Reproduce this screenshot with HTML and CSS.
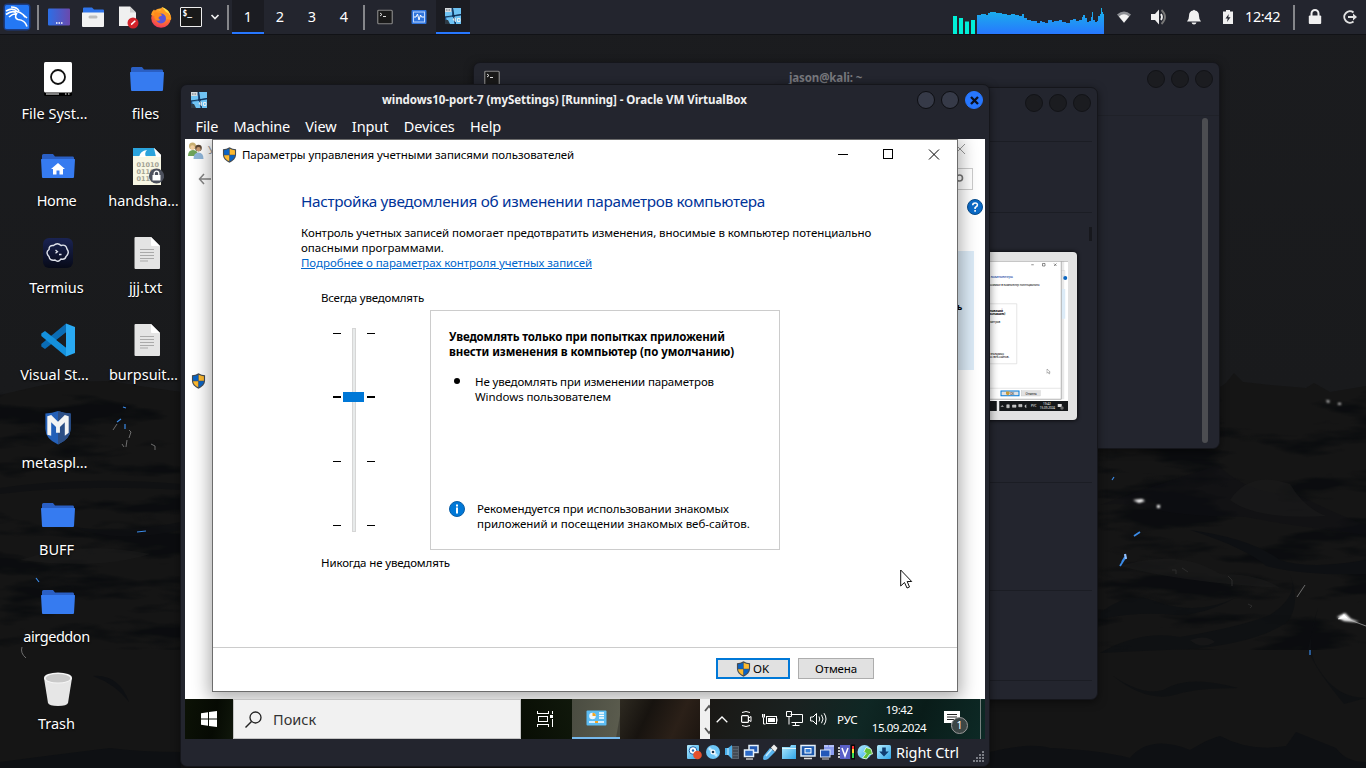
FILE: index.html
```html
<!DOCTYPE html>
<html lang="ru">
<head>
<meta charset="utf-8">
<title>Desktop</title>
<link rel="stylesheet" href="styles.css">
</head>
<body>
<svg class="defs" width="0" height="0" aria-hidden="true">
  <defs>
    <linearGradient id="gGraph" x1="0" y1="0" x2="0" y2="1"><stop offset="0" stop-color="#18b6e8"/><stop offset="1" stop-color="#2777ff"/></linearGradient>
    <linearGradient id="gCy" x1="0" y1="0" x2="1" y2="1"><stop offset="0" stop-color="#b4ecff"/><stop offset="1" stop-color="#2fa4e8"/></linearGradient>
    <linearGradient id="gDesk" x1="0" y1="0" x2="1" y2="0"><stop offset="0" stop-color="#2c6fe6"/><stop offset="1" stop-color="#6b49ad"/></linearGradient>
    <linearGradient id="gSky" x1="0" y1="0" x2="0" y2="1"><stop offset="0" stop-color="#1b1c1f"/><stop offset=".5" stop-color="#191a1c"/><stop offset="1" stop-color="#151618"/></linearGradient>
    <radialGradient id="gFox" cx=".6" cy=".2" r=".9"><stop offset="0" stop-color="#ffe14a"/><stop offset=".45" stop-color="#ff8a1e"/><stop offset="1" stop-color="#f0256a"/></radialGradient>
    <linearGradient id="gTermius" x1="0" y1="0" x2="0" y2="1"><stop offset="0" stop-color="#1a2352"/><stop offset="1" stop-color="#070a18"/></linearGradient>
    <filter id="soft" x="-60%" y="-60%" width="220%" height="220%"><feGaussianBlur stdDeviation=".8"/></filter>
    <filter id="ripple" x="0" y="0" width="100%" height="100%" color-interpolation-filters="sRGB"><feTurbulence type="fractalNoise" baseFrequency=".009 .04" numOctaves="4" seed="8"/><feColorMatrix type="matrix" values="0 0 0 0 .03  0 0 0 0 .04  0 0 0 0 .05  6 0 0 0 -3"/></filter>
  </defs>
  <symbol id="shield" viewBox="0 0 16 17">
    <path d="M8 .3C10 1.7 12.800 2.300 15 2.300V8c0 4-3 7-7 8.700C4 15 1 12 1 8V2.300C3.200 2.300 6 1.700 8 .3z" fill="#444b52"/>
    <path d="M7.800 1.900V8.300H2.200V3.500C4.300 3.400 6.200 2.800 7.800 1.900z" fill="#0a63c4"/><path d="M8.200 1.900C9.800 2.800 11.700 3.400 13.800 3.500V8.300H8.200z" fill="#fdb92e"/>
    <path d="M2.200 8.700H7.800V15.200C4.700 13.700 2.300 11.500 2.200 8.700z" fill="#fdb92e"/><path d="M8.200 8.700h5.600c-.1 2.800-2.500 5-5.600 6.500z" fill="#0a63c4"/>
  </symbol>
  <symbol id="folder" viewBox="0 0 34 34">
    <path d="M1 6.500Q1 5 2.500 5H12l2 2.500H32Q33 7.500 33 9v4H1z" fill="#2a5fc4"/><path d="M0 10.500Q0 10 .6 10H33.400Q34 10 34 10.500L33 28Q33 29 32 29H2Q1 29 1 28z" fill="#367bf0"/>
  </symbol>
  <symbol id="doc" viewBox="0 0 34 34">
    <path d="M5.500 1H21l9 9v22q0 1-1 1H5.500q-1 0-1-1V2q0-1 1-1z" fill="#e4e4e4"/><path d="M21 1l9 9h-8q-1 0-1-1z" fill="#fff"/><path d="M10 13.500h14M10 16.500h14M10 19.500h14M10 22.500h14M10 25h8" stroke="#a9a9a9" stroke-width="1"/>
  </symbol>
  <symbol id="vm" viewBox="0 0 16 16">
    <rect width="16" height="16" fill="#1c4f86"/><path d="M0 4L7 3.500V8.500L0 8.500zM8 0L16 0V6L9 7.200zM1 9.500L8 9 9.500 16H3zM9.500 8.500L16 7.500V16H11z" fill="#6fc3f3"/><path d="M7.500 0L10.500 16M0 9L16 6.500" stroke="#0a2848" stroke-width=".8"/><path d="M0 12h3l2 4H0z" fill="#2d3a45"/><path d="M0 0h6.500v4H0z" fill="#d5dadd"/><path d="M1 2h4.500" stroke="#64717a" stroke-dasharray="1 .5"/><path d="M9.500 9.500L8 12h2.500M10.300 10v4M12.500 10.500h2.500v3h-2.500z" stroke="#e8eef2" fill="none"/>
  </symbol>
  <symbol id="term" viewBox="0 0 16 16">
    <rect x=".75" y="1.250" width="14.500" height="13.500" rx="1" fill="#191919" stroke="#858585" stroke-width="1.200"/><path d="M3 4l2 1.500L3 7M6 7.500h3" stroke="#ddd" fill="none"/>
  </symbol>
</svg>

<svg class="wallpaper" viewBox="0 0 1366 768">
  <rect width="1366" height="768" fill="url(#gSky)"/>
  <path d="M0 395L30 388 48 384 60 382 110 381 140 386 181 392 500 396 1097 400 1219 388 1226 383 1234 373 1243 382 1270 385 1306 388 1314 383 1330 392 1366 386V768H0z" fill="#151515"/>
  <g opacity=".75"><rect y="390" width="1366" height="260" filter="url(#ripple)"/></g>
  <g fill="#0e1013">
    <path d="M1100 505q50-18 118-40 30 30 80 30 40 20 68 30v10q-80-10-120-18-70 0-110-12-25-2-36 0z" opacity=".4"/>
    <path d="M1190 530q60 8 90 30 30 10 86 0v14q-60 2-100-8-20-18-76-36z"/>
    <path d="M1100 613q30-25 60-10 40 12 75-5 -30 17-60 17-35-4-75 4zM1100 653q40-23 80-16 60-10 90-22 30-20 20-40 12 30-4 48-30 20-96 26-50 2-90 4zM1113 676q30 20 50 14 25-16 75-2-40 0-60 6-30 10-65-18z" opacity=".8"/>
    <path d="M1318 608q-14 40 0 60 18 30 48 30l-22 6q-30-36-36-55z" opacity=".8"/>
    <path d="M990 752q40-10 60-4 50 2 80 10 20-24 60-8 20-12 30-14 30 16 66 10l10-14 40 16q10 14 30 14v6H990z"/>
    <path d="M0 488q80-12 181-4v6q-100-6-181 4zM60 522q40 16 121 0v8q-70 16-121-8z" opacity=".7"/><path d="M93 676q26-2 36 26-14-18-36-26zM0 762q60-8 110-14 30 4 71 4v16H0z"/>
  </g>
  <g fill="#1b1b1b" opacity=".6"><path d="M1230 500q20-30 60-16 14 24 36 32-70 4-96-16zM1120 566q60-18 100 8 40 0 60 14-100-6-160-22zM20 560q60-20 130-6-50 16-130 6zM1190 640q16-6 25 2-14 8-25-2z"/></g>
  <g filter="url(#soft)" fill="#fff"><path d="M1133 500l9-1 3 2-6 2zM1157 505h3v3h-3zM1337 617l8-4 6 6 8 3-3 0-12-1zM1326 400l4 1-2 2zM1338 403h3v1.500h-3z"/></g>
  <path d="M1338 619l6-5 5 5zM1350 620l16 6" fill="#fff" stroke="#ccc" stroke-width=".6"/>
  <g stroke="#3b8be8" fill="none"><path d="M1120 566l5-8M1122 562l3-5M1134 536l6-4" stroke-width="1.800"/><path d="M1125 554l1 5" stroke="#8fc0ff" stroke-width="2.200"/><path d="M137 532l9-1M117 422l4-3M125 424v5M36 578l3 4M123 407l3 1M1310 650v5M1112 480l2-3" stroke-width="1.200"/></g>
  <path d="M129 430l2 2-2 6M127 440l-1 7M122 444l2 3M151 444l4 2 0 4M113 430l4-6M22 647q-2 6 4 11M1297 597l8-12" stroke="#777" fill="none" stroke-width=".9"/>
  <path d="M1172 570h4v4M1182 568l6 4M1228 576l4 4v6M1248 604l4 2-2 2" stroke="#2c2c2c" fill="none"/>
</svg>

<header class="panel">
  <div class="cell w34"><svg width="34" height="34" viewBox="0 0 34 34"><rect x="3.500" y="3.500" width="27" height="27" rx="4" fill="#1551c8" opacity=".55"/><rect x="5" y="5" width="24" height="24" rx="1.500" fill="#2478f5"/><path d="M6 11Q13 7 17 11.500Q20 12 23 14.500L27 18M6 14.500Q12 10 16 12.500M9 17Q12 14 16.500 13.500Q14 18 18 19.500Q25 20 27 26.500M11 7Q17 7 19 11M23 14.500L25 17" fill="none" stroke="#fff" stroke-width="1.600"/></svg></div>
  <i class="sep"></i>
  <div class="cell w34"><svg width="24" height="24" viewBox="0 0 24 24"><rect x="1" y="3.500" width="22" height="17" rx="1" fill="url(#gDesk)"/><path d="M9 18h1.500M11.500 18H13M14 18h1.500" stroke="#fff" stroke-width="1.500"/></svg></div>
  <div class="cell w34"><svg width="24" height="24" viewBox="0 0 24 24"><path d="M2 3.500q0-1 1-1h8l2 2h9q1 0 1 1V9H2z" fill="#2f74ea"/><path d="M1 7.500h22V21q0 1-1 1H2q-1 0-1-1z" fill="#f2f2f2"/><rect x="7.500" y="10.500" width="9" height="3" rx="1.500" fill="#bdbdbd"/></svg></div>
  <div class="cell w35"><svg width="24" height="24" viewBox="0 0 24 24"><path d="M3 1.500h11l6 6V21H3z" fill="#f0f0f0"/><path d="M14 1.500l6 6h-6z" fill="#cfcfcf"/><circle cx="17" cy="18" r="5.500" fill="#d3222a"/><path d="M14.800 20.200l.4-1.600 3.600-3.400 1 1-3.600 3.600z" fill="#fff"/></svg></div>
  <div class="cell w32"><svg width="24" height="24" viewBox="0 0 24 24"><circle cx="12" cy="13" r="9.800" fill="url(#gFox)"/><path d="M2 10Q3 6 5 4.500l1.500 2Q9 5 11 6L13 2l5 3q5 5 4 10" fill="#ff9a22"/><circle cx="12" cy="13.500" r="5" fill="#5a55d8"/><path d="M5 7.500q4-1 7 1.500l1 1.500-3 1.200q-1.500 2 1.500 3.300Q7 17 5.500 13z" fill="#ff8b1c"/><path d="M13 2q7 2.500 8.500 9-2-3.500-4.500-4Z" fill="#ffe04a"/></svg></div>
  <div class="cell w28"><svg width="22" height="20" viewBox="0 0 22 20"><rect x=".5" y=".5" width="21" height="19" rx=".5" fill="#191919" stroke="#eee"/><text x="2.500" y="8.500" class="prompt">$_</text></svg></div>
  <div class="cell w19"><svg width="10" height="6" viewBox="0 0 10 6"><path d="M1.500 1L5 4.500 8.500 1" fill="none" stroke="#eee" stroke-width="1.700"/></svg></div>
  <i class="sep"></i>
  <div class="ws on">1</div><div class="ws">2</div><div class="ws">3</div><div class="ws">4</div>
  <i class="sep"></i>
  <div class="cell w34"><svg width="16" height="16"><use href="#term"/></svg></div>
  <div class="cell w34"><svg width="16" height="16" viewBox="0 0 16 16"><rect x=".5" y="1" width="15" height="14" rx="1" fill="#2f74dc"/><rect x="2.500" y="3" width="11" height="10" fill="none" stroke="#bcd6ff"/><path d="M3 8h2l1.500-3L8 11l1.500-5 1 2H13" fill="none" stroke="#fff"/></svg></div>
  <div class="cell w34 on"><svg width="16" height="16"><use href="#vm"/></svg></div>
  <div class="tray">
    <svg width="152" height="34" viewBox="0 0 152 34"><path d="M0 16h4v18H0zM6 18h4v16H6zM12 21.500h4V34h-4zM18 20h4v14h-4z" fill="#00f0d8"/><path d="M24 34V15h4v-1h5v1h2v-2h2v-1h6v1h6v1h5v1h4v-1h4v1h4v1h3v-2h2v4h3v2h4v1h6v2h3v-2h2v1h3v1h3v-3h4v2h2v-1h5v-1h3v2h4v1h4v-3h3v-1h3v2h3v-1h3v-3h1v-2h2v3h2v4h2v-1h2v-4h1v-5h1v8h2v2h2v-1h1v-5h2v-2h1v-6h1v4h1v2h1V34z" fill="url(#gGraph)"/></svg>
    <div class="cell w37"><svg width="16" height="16" viewBox="0 0 16 16"><path d="M1 5.500Q8-.5 15 5.500L8 14z" fill="#8d8f94"/><path d="M3 7.500Q8 3 13 7.500L8 13.500z" fill="#f4f4f4"/></svg></div>
    <div class="cell w34"><svg width="18" height="18" viewBox="0 0 18 18"><path d="M1 6h4l4-4.500v15L5 12H1z" fill="#f0f0f0"/><path d="M11 6q2 3 0 6" fill="none" stroke="#f0f0f0" stroke-width="1.800"/><path d="M11.500 2q7 7 0 14" fill="none" stroke="#777" stroke-width="1.800"/></svg></div>
    <div class="cell w35"><svg width="16" height="16" viewBox="0 0 16 16"><path d="M7 1.500Q8 0 9 1.500q4 .5 4 5.500 0 3.500 2 5.500H1q2-2 2-5.500 0-5 4-5.500zM5.500 13.500h5q-.5 2-2.500 2t-2.500-2z" fill="#f0f0f0"/></svg></div>
    <div class="cell w33"><svg width="12" height="16" viewBox="0 0 12 16"><path d="M1 2.500h3V1h4v1.500h3V15H1z" fill="#f0f0f0"/><path d="M6.800 5L3.500 9.500h2.200L5 13l3.500-4.800H6.300z" fill="#23252e"/></svg></div>
    <span class="clock">12:42</span><i class="sep thin"></i>
    <div class="cell w38"><svg width="14" height="16" viewBox="0 0 14 16"><path d="M3.500 7V4.500a3.500 3.500 0 0 1 7 0V7" fill="none" stroke="#f0f0f0" stroke-width="2"/><rect x=".8" y="6.500" width="12.400" height="8.500" rx="1" fill="#f0f0f0"/></svg></div>
    <div class="cell w32"><svg width="16" height="16" viewBox="0 0 16 16"><path d="M11.500 3.500A5.700 5.700 0 1 0 11.500 12.500" fill="none" stroke="#e2e2e2" stroke-width="2"/><path d="M6 7h5V4.500L15 8l-4 3.500V9H6z" fill="#e2e2e2"/></svg></div>
  </div>
</header>

<main class="icons">
  <div class="ico cut"><svg width="34" height="34" viewBox="0 0 34 34"><rect x="3" y="1" width="28" height="33" rx="1.500" fill="#000"/><rect x="3" y="0" width="28" height="30.500" rx="1.500" fill="#fff"/><circle cx="17" cy="15" r="7" fill="none" stroke="#111" stroke-width="1.800"/><path d="M5 32h13M24 32h1.500M27 32h1.500" stroke="#fff"/></svg><span>File Syst…</span></div>
  <div class="ico"><svg width="34" height="34" viewBox="0 0 34 34"><use href="#folder" width="34" height="34"/><path d="M17 14l7 6h-2v5.500h-3.500v-4h-3v4H12V20h-2z" fill="#fff"/></svg><span class="tight">Home</span></div>
  <div class="ico"><svg width="34" height="34" viewBox="0 0 34 34"><rect x="2" y="2" width="30" height="30" rx="6" fill="url(#gTermius)"/><path d="M12.500 9.500q4-3.500 7.500 0 5-1.500 6 3.500 3 4-1 7.500-1 3.500-5 2.500-3 4-6 1-5.500 1-6-3.500-4-4 0-7 0-4.500 4.500-4z" fill="none" stroke="#dfe2ea" stroke-width="1.400"/><path d="M14.500 14l2 1.700-2 1.500M18 18.500h2.500" stroke="#dfe2ea" fill="none" stroke-width="1.300"/></svg><span>Termius</span></div>
  <div class="ico cut"><svg width="34" height="34" viewBox="0 0 34 34"><path d="M25 .5L34 4V30l-9 3.500z" fill="#29a9f2"/><path d="M25 .5V9.500L4 26 .3 23.500V21z" fill="#0b6cb4"/><path d="M25 33.500V24.500L4 8 .3 10.500V13z" fill="#1490dc"/><path d="M25 9.500V24.500L15.500 17z" fill="#1c1d20"/></svg><span>Visual St…</span></div>
  <div class="ico cut"><svg width="34" height="34" viewBox="0 .5 34 35"><path d="M17 .5Q23 3 30 3V19q0 10-13 16Q4 29 4 19V3Q11 3 17 .5z" fill="#2460b8"/><path d="M17 .5Q23 3 30 3V19q0 10-13 16z" fill="#2d4f86"/><path d="M6 25V6l4-1.500 7 7 7-7L28 6v17l-4 3V12l-5 5v6h-4v-6l-5-5v14z" fill="#f4f4f4"/></svg><span>metaspl…</span></div>
  <div class="ico"><svg width="34" height="34"><use href="#folder"/></svg><span>BUFF</span></div>
  <div class="ico"><svg width="34" height="34"><use href="#folder"/></svg><span class="tight">airgeddon</span></div>
  <div class="ico"><svg width="34" height="34" viewBox="0 0 34 34"><path d="M3 6L7 31q1 3 10 3t10-3L31 6z" fill="#e6e6e6"/><ellipse cx="17" cy="6" rx="14" ry="5.500" fill="#f5f5f5"/><ellipse cx="17" cy="6.300" rx="12.300" ry="4.300" fill="#c9c9c9"/></svg><span>Trash</span></div>
  <div class="ico"><svg width="34" height="34"><use href="#folder"/></svg><span>files</span></div>
  <div class="ico cut"><svg class="tall" width="34" height="38" viewBox="0 0 34 38"><path d="M3 0H24l7 7V37H3z" fill="#f8f7e4"/><path d="M3 0H24l5 8H3z" fill="#2aa3dc"/><path d="M9 9Q10 3 17 2q-3 3-1 7z" fill="#fff"/><path d="M24 0l7 7v2h-5z" fill="#fff"/><g class="bits"><text x="6.500" y="19">01010</text><text x="6.500" y="26">01101</text><text x="6.500" y="33">01110</text></g><circle cx="26.500" cy="28" r="7.600" fill="#4c505c"/><path d="M24.200 27v-1.500a2.300 2.300 0 0 1 4.600 0V27" fill="none" stroke="#fff" stroke-width="1.300"/><rect x="22.500" y="27" width="8" height="5.500" fill="#fff"/></svg><span>handsha…</span></div>
  <div class="ico"><svg width="34" height="34"><use href="#doc"/></svg><span>jjj.txt</span></div>
  <div class="ico cut"><svg width="34" height="34"><use href="#doc"/></svg><span>burpsuit…</span></div>
</main>

<section class="win termwin">
  <div class="tbar"><svg width="16" height="16"><use href="#term"/></svg><b>jason@kali: ~</b><div class="dots"><i></i><i></i><i></i></div></div>
  <div class="tbody"><i class="scroll"></i></div>
</section>

<section class="win mgr">
  <div class="mbar"><div class="dots"><i></i><i></i><i></i></div></div>
  <div class="r1"></div><div class="r2"><i></i></div>
  <div class="r3">
    <div class="thumb">
      <svg width="200" height="150" viewBox="0 0 800 600">
        <rect width="800" height="600" fill="#fff"/><path d="M773 0h12v553h-12z" fill="#e9e9e9"/><path d="M773 112h16v119h-16z" fill="#dcebf7"/><path d="M765 38h22v22h-22" fill="none" stroke="#ccc" stroke-width="2"/><circle cx="789" cy="68" r="8" fill="#0b66c0"/>
        <rect x="27" width="746" height="553" fill="#fff"/><path d="M27 1H773V553H27M773 1h27" fill="none" stroke="#999" stroke-width="3"/><path d="M27 509H773M245 171H595V411H245" fill="none" stroke="#ccc" stroke-width="2"/>
        <path d="M653 15h10M698 10h10v10h-10zM744 10l10 10M754 10l-10 10" fill="none" stroke="#222" stroke-width="2"/>
        <text x="116" y="68" class="th" textLength="464">Настройка уведомления об изменении параметров компьютера</text>
        <text x="116" y="98" textLength="570">Контроль учетных записей помогает предотвратить изменения, вносимые в компьютер потенциально</text>
        <text x="264" y="202" class="tb" textLength="276">Уведомлять только при попытках приложений</text><text x="264" y="217" class="tb" textLength="285">внести изменения в компьютер (по умолчанию)</text>
        <text x="290" y="247" textLength="239">Не уведомлять при изменении параметров</text><text x="292" y="374" textLength="252">Рекомендуется при использовании знакомых</text><text x="292" y="389" textLength="273">приложений и посещении знакомых веб-сайтов.</text>
        <rect x="532" y="520" width="72" height="19" fill="#e1e1e1" stroke="#0078d7" stroke-width="4"/><path d="M552 522h14v8q-2 6-7 8-6-3-7-8z" fill="#c79a3a"/><text x="568" y="534">OK</text><rect x="613" y="519" width="76" height="21" fill="#e1e1e1" stroke="#aaa"/><text x="630" y="534">Отмена</text>
        <path d="M716 432v17l4-4 4 7 3-1-3-7h5z" fill="#fff" stroke="#000"/>
        <rect y="560" width="800" height="40" fill="#15181a"/><rect x="515" y="560" width="10" height="40" fill="#eee"/>
        <path d="M532 583l5-5 5 5M555 575h10v12h-10zM578 576h14v9h-14zM603 574h13v9h-13zM627 580l5-5v12z" fill="#bbb" stroke="#ddd" stroke-width="2"/><g class="tw"><text x="652" y="584">РУС</text><text x="700" y="576">19:42</text><text x="687" y="593">15.09.2024</text></g><path d="M759 572h16v12h-16z" fill="#ddd"/><circle cx="776" cy="588" r="7" fill="#666"/>
      </svg>
    </div>
  </div>
  <div class="r4"></div><div class="r5"></div>
</section>

<section class="win vb">
  <div class="vtitle"><svg width="16" height="16"><use href="#vm"/></svg><b>windows10-port-7 (mySettings) [Running] - Oracle VM VirtualBox</b><div class="vbtn"><i></i><i></i><i class="x"><svg width="9" height="9" viewBox="0 0 9 9"><path d="M1 1l7 7M8 1L1 8" stroke="#0a1020" stroke-width="2.300"/></svg></i></div></div>
  <nav class="menu"><span>File</span><span class="m">Machine</span><span>View</span><span>Input</span><span>Devices</span><span>Help</span></nav>

  <div class="guest">
    <div class="back">
      <div class="bleft">
        <div class="btop"><svg width="17" height="17" viewBox="0 0 17 17"><circle cx="5.500" cy="4" r="3.500" fill="#c9b072"/><circle cx="5.500" cy="5.500" r="2.200" fill="#f0cda0"/><path d="M1 14q0-6 5-6t5 6z" fill="#6fa35a"/><circle cx="11.500" cy="6" r="3.300" fill="#5a4634"/><circle cx="11.500" cy="7.300" r="2.200" fill="#c99a72"/><path d="M6.500 17q0-6.500 5-6.500t5 6.500z" fill="#8fb6da"/></svg><span>У</span></div>
        <svg class="arrow" width="14" height="12" viewBox="0 0 14 12"><path d="M6 1L1.500 6 6 11M1.500 6H13" fill="none" stroke="#858585" stroke-width="1.500"/></svg>
        <svg class="sh2" width="15" height="16"><use href="#shield"/></svg>
      </div>
      <div class="bright">
        <svg class="bx" width="10" height="12" viewBox="0 0 10 12"><path d="M-3 1l10 10M7 1L-3 11" stroke="#999" fill="none"/></svg>
        <div class="bsearch"><svg width="12" height="14" viewBox="0 0 12 14"><circle cx="2.500" cy="6" r="3" fill="none" stroke="#777" stroke-width="1.600"/></svg></div>
        <svg class="bq" width="16" height="16" viewBox="0 0 16 16"><circle cx="8" cy="8" r="7.500" fill="#0b6bc8" stroke="#0a4d8c"/><path d="M5.700 6.300q0-2.300 2.400-2.300t2.300 2Q10.400 7.200 8.100 8.600V10M8.100 11v1.700" fill="none" stroke="#fff" stroke-width="1.600"/></svg>
        <div class="bblue"><span>ь</span></div>
      </div>
    </div>

    <div class="dialog">
      <div class="dtitle"><svg width="15" height="16"><use href="#shield"/></svg><span>Параметры управления учетными записями пользователей</span>
        <svg class="wb" width="102" height="11" viewBox="0 0 102 11" shape-rendering="crispEdges"><path d="M0 5.500h10M45.500.5h9v9h-9z" fill="none" stroke="#000"/><path d="M91 .5l10 10M101 .5l-10 10" stroke="#000" fill="none" shape-rendering="auto"/></svg></div>
      <div class="dcontent">
        <h1>Настройка уведомления об изменении параметров компьютера</h1>
        <p class="l1">Контроль учетных записей помогает предотвратить изменения, вносимые в компьютер потенциально</p>
        <p class="l2">опасными программами.</p>
        <p><a class="l3">Подробнее о параметрах контроля учетных записей</a></p>
        <div class="uac">
          <p class="always">Всегда уведомлять</p>
          <div class="mid">
            <svg class="slider" width="42" height="204" viewBox="0 0 42 204" shape-rendering="crispEdges"><rect x="19.500" y=".5" width="3" height="203" fill="#e7eaea" stroke="#d6d6d6"/><path d="M0 5.500h8M34 5.500h8M0 133.500h8M34 133.500h8M0 197.500h8M34 197.500h8" stroke="#000"/><path d="M0 69h8M34 69h8" stroke="#000" stroke-width="2"/><rect x="10" y="64" width="21" height="10" fill="#0078d7"/></svg>
            <div class="box">
              <p class="b1">Уведомлять только при попытках приложений</p><p class="b2">внести изменения в компьютер (по умолчанию)</p>
              <div class="bul"><i></i><div><p class="c1">Не уведомлять при изменении параметров</p><p class="c2">Windows пользователем</p></div></div>
              <div class="rec"><svg width="16" height="16" viewBox="0 0 16 16"><circle cx="8" cy="8" r="7.500" fill="#0078d7" stroke="#0b5ea6"/><path d="M8 6.500v6M8 3.500v2" stroke="#fff" stroke-width="2"/></svg><div><p class="d1">Рекомендуется при использовании знакомых</p><p class="d2">приложений и посещении знакомых веб-сайтов.</p></div></div>
            </div>
          </div>
          <p class="never">Никогда не уведомлять</p>
        </div>
      </div>
      <div class="dfoot"><button class="ok"><svg width="15" height="16"><use href="#shield"/></svg>OK</button><button>Отмена</button></div>
    </div>

    <div class="taskbar">
      <div class="start"><svg width="16" height="16" viewBox="0 0 16 16"><path d="M0 2.300L7 1.300V7.500H0zM8 1.100L16 0V7.500H8zM0 8.500H7V14.700L0 13.700zM8 8.500H16V16L8 14.900z" fill="#fff"/></svg></div>
      <div class="search"><svg width="17" height="17" viewBox="0 0 17 17"><circle cx="10.500" cy="6.500" r="5.500" fill="none" stroke="#222" stroke-width="1.300"/><path d="M6.500 10.500L.5 16.500" stroke="#222" stroke-width="1.400"/></svg><span>Поиск</span></div>
      <div class="tview"><svg width="17" height="16" viewBox="0 0 17 16" shape-rendering="crispEdges"><path d="M.5 0V2.500H11.500V0M.5 16V13.500H11.500V16M1.500 5.500h9v5h-9zM15 0v3M15 8v8" fill="none" stroke="#fff"/><rect x="13" y="4" width="3" height="3" fill="#fff"/></svg></div>
      <div class="app"><svg width="21" height="16" viewBox="0 0 21 16"><rect x=".5" y=".5" width="20" height="15" rx="1" fill="#5cbcf2"/><circle cx="6.500" cy="6" r="3.300" fill="#eef7fd"/><path d="M6.500 6V2.700A3.300 3.300 0 0 1 9.800 6z" fill="#f4a522"/><path d="M13 3h5M13 5.500h5M13 8h5M3 12h6M12 12h6" stroke="#fff" stroke-width="1.300"/><path d="M9 12h3" stroke="#f4a522" stroke-width="2"/></svg></div>
      <div class="wood"></div>
      <div class="uparrows"><svg width="10" height="40" viewBox="0 0 10 40"><path d="M5 12l4-5 3 4M5 29l4 5 3-4" fill="none" stroke="#555" stroke-width="1.800"/></svg></div>
      <div class="gtray">
        <svg width="12" height="7" viewBox="0 0 12 7"><path d="M.7 6.300L6 1l5.300 5.300" fill="none" stroke="#fff" stroke-width="1.300"/></svg>
        <svg width="12" height="18" viewBox="0 0 12 18"><rect x="1.600" y="5.600" width="6.800" height="6.800" rx="1" fill="none" stroke="#fff" stroke-width="1.200"/><path d="M8.500 8l2.500-1.500v5L8.500 10M2 2.500q4-2 8 0M2 15.500q4 2 8 0" fill="none" stroke="#fff"/></svg>
        <svg width="17" height="14" viewBox="0 0 17 14"><rect x="5.500" y="4.500" width="10" height="7" fill="none" stroke="#fff"/><rect x="7" y="6" width="7" height="4" fill="#fff"/><path d="M16 6.500v3M3 2v3M1.500 2v3q1 2 2 0M3.500 2v3M2.500 6v6h2" stroke="#fff" fill="none"/></svg>
        <svg width="17" height="16" viewBox="0 0 17 16"><path d="M4.500 3.500h12v8H5.500M9.500 11.500v3M6.500 14.500h7M.5.500h5v5h-5zM3 5.500v8" fill="none" stroke="#fff"/></svg>
        <svg width="17" height="14" viewBox="0 0 17 14"><path d="M.6 5h2.400L6.500 1.500v11L3 9H.6zM9 4.500q1.500 2.500 0 5M11.500 2.800q3 4.200 0 8.400M14 1.200q4 5.800 0 11.600" fill="none" stroke="#fff"/></svg>
        <span class="lang">РУС</span>
        <div class="gclock"><span>19:42</span><span class="date">15.09.2024</span></div>
        <div class="note"><svg width="16" height="16" viewBox="0 0 16 16"><path d="M0 0h16v12h-5l-3.500 4v-4H0z" fill="#fff"/><path d="M3 3.500h10M3 6h10M3 8.500h7" stroke="#222"/></svg><em>1</em></div>
        <i class="peek"></i>
      </div>
    </div>
    <svg class="cursor" width="13" height="20" viewBox="0 0 13 20"><path d="M.7 1V17L4.500 13.500 7 19l2.500-1L7.200 12.500H11.700z" fill="#fff" stroke="#111"/></svg>
  </div>

  <footer class="vstat">
    <svg width="16" height="16" viewBox="0 0 16 16"><rect x="1" y="1" width="12" height="14" rx="1" fill="url(#gCy)"/><circle cx="7" cy="6.500" r="3.800" fill="#fff" stroke="#2068b0"/><circle cx="7" cy="6.500" r="1.200" fill="#2068b0"/><circle cx="11.500" cy="11" r="4.300" fill="#e4512e"/></svg>
    <svg width="16" height="16" viewBox="0 0 16 16"><circle cx="8" cy="8" r="7" fill="#6cc5f6"/><path d="M8 8L4 4M8 8l4 4" stroke="#bfe9ff" stroke-width="2.500"/><circle cx="8" cy="8" r="2.500" fill="#fff"/><circle cx="8" cy="8" r="1.300" fill="#17324d"/></svg>
    <svg width="16" height="16" viewBox="0 0 16 16"><path d="M8 2h7v13H8z" fill="#59616b"/><path d="M9 4h5M9 7h5M9 10h5M9 13h5" stroke="#30363e"/><path d="M1 4h3l4-3v14l-4-4H1z" fill="#4aaeea"/><path d="M4 4v7" stroke="#c8f0ff"/></svg>
    <svg width="16" height="16" viewBox="0 0 16 16"><rect x="6" y="1.500" width="9" height="7" fill="#2258b0" stroke="#e4f0fa" stroke-width="1.500"/><rect x="1.500" y="6" width="9" height="6.500" fill="#2b6ac8" stroke="#e4f0fa" stroke-width="1.500"/><path d="M3 15h7" stroke="#ddd" stroke-width="1.300"/></svg>
    <svg width="16" height="16" viewBox="0 0 16 16"><path d="M1.500 12L8 4l5 4-7 7q-4 2-5 0z" fill="#5ab4ee"/><path d="M9 3.500l3-3L15.500 4l-2.500 4z" fill="#eee"/><path d="M4 12l6-7" stroke="#c4ebff" stroke-width="1.500"/></svg>
    <svg width="16" height="16" viewBox="0 0 16 16"><path d="M1 3h8l1-2h5v14H1z" fill="url(#gCy)"/><path d="M1 4.500h14" stroke="#d8f5ff"/></svg>
    <svg width="16" height="16" viewBox="0 0 16 16"><rect x="1" y="1.500" width="14" height="10.500" fill="#1d57aa" stroke="#e4f0fa" stroke-width="1.500"/><rect x="5" y="4.500" width="6" height="4.500" fill="#3b83d8" stroke="#fff"/><path d="M4 14.500h8" stroke="#ddd" stroke-width="1.500"/></svg>
    <svg width="16" height="16" viewBox="0 0 16 16"><path d="M5 1h10v10H5z" fill="#8a9cf0"/><path d="M5 2h4M10 2h5" stroke="#dfe6ff"/><rect x="1.500" y="6" width="9.500" height="7" fill="#2258b8" stroke="#dce8f8"/><path d="M3 15h7" stroke="#ccc"/></svg>
    <svg width="20" height="16" viewBox="0 0 20 16"><rect x="3" y="1" width="10" height="14" fill="#5960c8"/><path d="M1 4h2M1 7h2M1 10h2M1 13h2M5 4l3 8 3-8" stroke="#fff" fill="none" stroke-width="1.500"/><rect x="14" y=".5" width="4" height="15" fill="#0a0a0a"/><path d="M15 2h2v4h-2z" fill="#f33"/><path d="M15 5h2v4h-2z" fill="#fd3"/><path d="M15 9h2v5h-2z" fill="#3d5"/></svg>
    <svg width="16" height="16" viewBox="0 0 16 16"><circle cx="7.500" cy="8" r="7" fill="url(#gCy)"/><path d="M9 3.500l5 1.500 1.500 5-3 .5-3 4.500-4-1 3.500-4.500-2-2z" fill="#63c23a" stroke="#f0fff0" stroke-width=".8"/></svg>
    <svg width="16" height="16" viewBox="0 0 16 16"><rect x="1" y="1" width="14" height="14" rx="1.500" fill="url(#gCy)"/><path d="M6.200 3.500h3.600v4h3L8 12.500 3.200 7.500h3z" fill="#103c70"/></svg>
    <span>Right Ctrl</span>
    <svg class="grip" width="12" height="12" viewBox="0 0 12 12"><path d="M9 0h2v2H9zM6 3h2v2H6zM9 3h2v2H9zM3 6h2v2H3zM6 6h2v2H6zM9 6h2v2H9zM0 9h2v2H0zM3 9h2v2H3zM6 9h2v2H6zM9 9h2v2H9z" fill="#7b7e86"/></svg>
  </footer>
</section>
</body>
</html>
```
FILE: styles.css
```css
*{box-sizing:border-box}
body{margin:0;width:1366px;height:768px;overflow:hidden;position:relative;background:#151618;font-family:"Noto Sans",sans-serif;color:#fff}
svg{display:block;flex:none}
p,h1{margin:0}
.defs{position:absolute}
.wallpaper{position:absolute;left:0;top:0;width:1366px;height:768px}

/* top panel */
.panel{position:relative;display:flex;height:35px;background:#23252e;border-bottom:1px solid #111216;font-size:14.5px}
.cell{display:flex;align-items:center;justify-content:center;height:34px;flex:none}
.w19{width:19px}.w28{width:28px}.w32{width:32px}.w33{width:33px}.w34{width:34px}.w35{width:35px}.w37{width:37px}.w38{width:38px}
.sep{width:8px;flex:none;height:25px;margin-top:5px;background:linear-gradient(#85868a,#85868a) 3px 0/2px 100% no-repeat}
.sep.thin{width:4px;background-position:1px 0}
.ws{width:32px;height:34px;line-height:32px;text-align:center}
.on{background:#1b1c22;border-bottom:2px solid #2777ff}
.tray{display:flex;margin-left:auto}
.clock{width:48px;line-height:33px;padding-left:1px;letter-spacing:-.4px}
.prompt{font:700 8px "DejaVu Sans Mono",monospace;fill:#fff}

/* desktop icons */
.icons{position:absolute;left:13px;top:61px;display:grid;grid-template-rows:repeat(8,87.15px);grid-auto-flow:column;grid-auto-columns:89px}
.ico{display:flex;flex-direction:column;align-items:center;font-size:14.5px;padding-top:1px}
.ico svg{margin-left:1px}
.ico svg.tall{margin:-1px 0 -3px 1px}
.ico span{line-height:20px;margin:7px 1px 0 0;white-space:nowrap;text-shadow:0 1px 2px #000;padding-right:1px}
.ico.cut span{margin-right:5px}
.ico .tight{letter-spacing:-.45px;margin-right:1px}
.bits{font:700 6.5px "DejaVu Sans",sans-serif;fill:#a3a394}

/* host windows */
.win{position:absolute;background:#23252e;border:1px solid #15161b;border-radius:7px;box-shadow:0 2px 8px rgba(0,0,0,.5)}
.dots{display:flex;gap:6px;margin-left:auto}
.dots i{width:18px;height:18px;border-radius:50%;background:#1b1c20;border:1px solid #121317}
.termwin{left:473px;top:62px;width:747px;height:387px}
.tbar{display:flex;height:53px;padding:7px 6px 0 10px;border-bottom:1px solid #1f2128}
.tbar b{font-size:11.5px;letter-spacing:-.12px;line-height:16px;color:#77787d;margin-left:289px}
.tbody{padding-top:2px}
.scroll{display:block;width:6px;height:325px;border-radius:3px;background:#4c4d51;margin-left:728px}
.mgr{left:780px;top:87px;width:318px;height:613px;padding-right:5px}
.mbar{display:flex;height:54px;padding:6px 1px 0 0;border-bottom:1px solid #1b1d24}
.r1{height:71px;border-bottom:1px solid #1b1d24}
.r2{height:39px;padding-top:14px}
.r2 i{display:block;width:3px;height:14px;background:#17181d;margin-left:auto}
.r3{height:231px;border-bottom:1px solid #1b1d24}
.thumb{width:238px;height:168px;margin-left:58px;background:#e2e2e2;border-radius:4px;padding:9px 9px 0 29px;box-shadow:0 0 4px #000}
.thumb text{font-family:"Noto Sans",sans-serif;font-size:12px}
.thumb .th{font-size:16px;fill:#039}
.thumb .tb{font-weight:700}
.tw{fill:#fff}
.r4{height:108px;border-bottom:1px solid #1b1d24}
.r5{height:90px;border-bottom:1px solid #1b1d24}

/* VirtualBox window */
.vb{left:180px;top:84px;width:810px;height:683px;padding:0 4px}
.vtitle{display:flex;height:30px;padding:7px 2px 0 6px}
.vtitle>b{font-size:11.5px;letter-spacing:-.05px;line-height:16px;margin-left:175px;color:#f0f0f0}
.vbtn{display:flex;gap:6px;margin:-1px 0 0 auto}
.vbtn i{width:18px;height:18px;border-radius:50%;background:#363a48;border:1px solid #0d0e12;display:flex;align-items:center;justify-content:center}
.vbtn i.x{background:#2777ff;border-color:#2777ff}
.menu{display:flex;gap:15.300px;height:24px;padding-left:10.500px;font-size:14.5px;line-height:23px;letter-spacing:-.1px}
.menu .m{letter-spacing:-.25px}
.guest{position:relative;height:600px;color:#000;font-size:11.5px;line-height:15px;overflow:hidden;background:#fff}
.back{display:flex;justify-content:space-between;height:560px}
.bleft{width:28px}
.btop{display:flex;height:34px;padding:3px 0 0 2px;color:#999;gap:4px}
.arrow{margin:0 0 0 13px}
.sh2{margin:188px 0 0 6px}
.bright{width:28px}
.bx{margin:4px 0 0 1px}
.bsearch{width:16px;height:22px;margin-top:13px;border:1px solid #ccc;border-left:0;padding-top:3px}
.bq{margin:9px 0 0 10px}
.bblue{width:17px;height:119px;margin-top:36px;background:#dcebf7;padding-top:49px;font-weight:700;font-size:9px;line-height:14px}

/* UAC dialog, lies over the control panel window */
.dialog{position:absolute;left:27px;top:0;width:746px;height:553px;background:#fff;border:1px solid #6c6c6c;box-shadow:0 3px 16px 3px rgba(0,0,0,.32);display:flex;flex-direction:column}
.dtitle{display:flex;align-items:center;height:29px;padding:0 17px 0 9px}
.dtitle span{margin-left:5px;letter-spacing:-.094px}
.wb{margin-left:auto}
.dcontent{padding:20px 0 0 88px;height:479px;border-bottom:1px solid #ccc;white-space:nowrap}
h1{font-weight:400;font-size:15.3px;letter-spacing:-.31px;line-height:24px;color:#039;margin-bottom:12px}
.l1{letter-spacing:-.08px}
.l3{color:#06c;text-decoration:underline;letter-spacing:-.06px}
.uac{padding:20px 0 0 20px}
.always{letter-spacing:-.21px}
.mid{display:flex;margin-top:5px}
.slider{margin:18px 0 0 12px}
.box{width:350px;height:240px;margin-left:55px;border:1px solid #ccc;padding:18px;display:flex;flex-direction:column}
.b1,.b2{font-weight:700}
.b1{letter-spacing:-.12px}.b2{letter-spacing:-.08px}
.bul{display:flex;margin-top:15px}
.bul i{width:6px;height:6px;border-radius:50%;background:#000;margin:4px 15px 0 5px}
.c1{letter-spacing:-.14px}.c2{letter-spacing:-.08px}
.rec{display:flex;gap:12px;margin-top:auto}
.d1{letter-spacing:-.1px}
.never{letter-spacing:-.14px;margin-top:5px}
.dfoot{display:flex;justify-content:flex-end;gap:8px;padding:10px 83px 0 0}
button{width:76px;height:21px;border:1px solid #adadad;background:#e1e1e1;color:#000;font:11.5px/15px "Noto Sans",sans-serif;padding:0;letter-spacing:-.15px;display:flex;align-items:center;justify-content:center}
.ok{width:74px;border:2px solid #0078d7;gap:2px;padding-right:1px}
.cursor{position:absolute;left:715px;top:430px}

/* guest taskbar */
.taskbar{position:relative;display:flex;height:40px;background:#10120e;color:#fff}
.taskbar>div{display:flex;align-items:center;justify-content:center}
.taskbar .start{width:48px;background:linear-gradient(100deg,#0c1206,#060a03 60%,#10170b)}
.taskbar .search{width:288px;background:#f1f1f1;border:1px solid #c4c4c4;color:#333;justify-content:flex-start;padding-left:11px;font-size:14.5px;gap:11px}
.tview{width:51px;padding-right:2px;background:linear-gradient(70deg,#080d04,#10180b)}
.app{width:48px;background:linear-gradient(100deg,#4a4c41,#5a5b4d 92%,#44443a 94%);border-bottom:2px solid #76b9ed}
.wood{width:80px;background:linear-gradient(115deg,#2e2a21,#17130f 35%,#2b2018 70%,#1c1510)}
.uparrows{width:10px;background:#f0f0f0;overflow:hidden}
.taskbar .gtray{width:275px;background:linear-gradient(110deg,#1a1815,#1a2120 30%,#0f2724 55%,#091c19 75%,#0d2a26);justify-content:flex-start;padding-left:6px}
.gtray svg:nth-child(2){margin-left:12px}
.gtray svg:nth-child(3){margin-left:9px}
.gtray svg:nth-child(4){margin-left:8px}
.gtray svg:nth-child(5){margin-left:7px}
.lang{margin-left:10px;width:23px}
.gclock{display:flex;flex-direction:column;align-items:center;width:56px;margin-left:11px;line-height:18px;letter-spacing:-.45px}
.note{position:relative;margin-left:17px;width:16px}
.note em{position:absolute;left:7px;top:6px;width:17px;height:17px;border-radius:50%;border:1px solid #999;background:#3c4645;font:10.5px/15px "Noto Sans",sans-serif;text-align:center}
.peek{width:1px;height:40px;background:#75807e;margin-left:20px}

/* VM status bar */
.vstat{display:flex;align-items:center;height:25px;padding-left:501px;gap:3px;font-size:14.5px;letter-spacing:-.08px}
.vstat span{margin-left:1px}
.vstat svg:nth-child(9){margin:0 -3px 0 -1px}
.vstat .grip{margin:10px 0 0 auto}
```
